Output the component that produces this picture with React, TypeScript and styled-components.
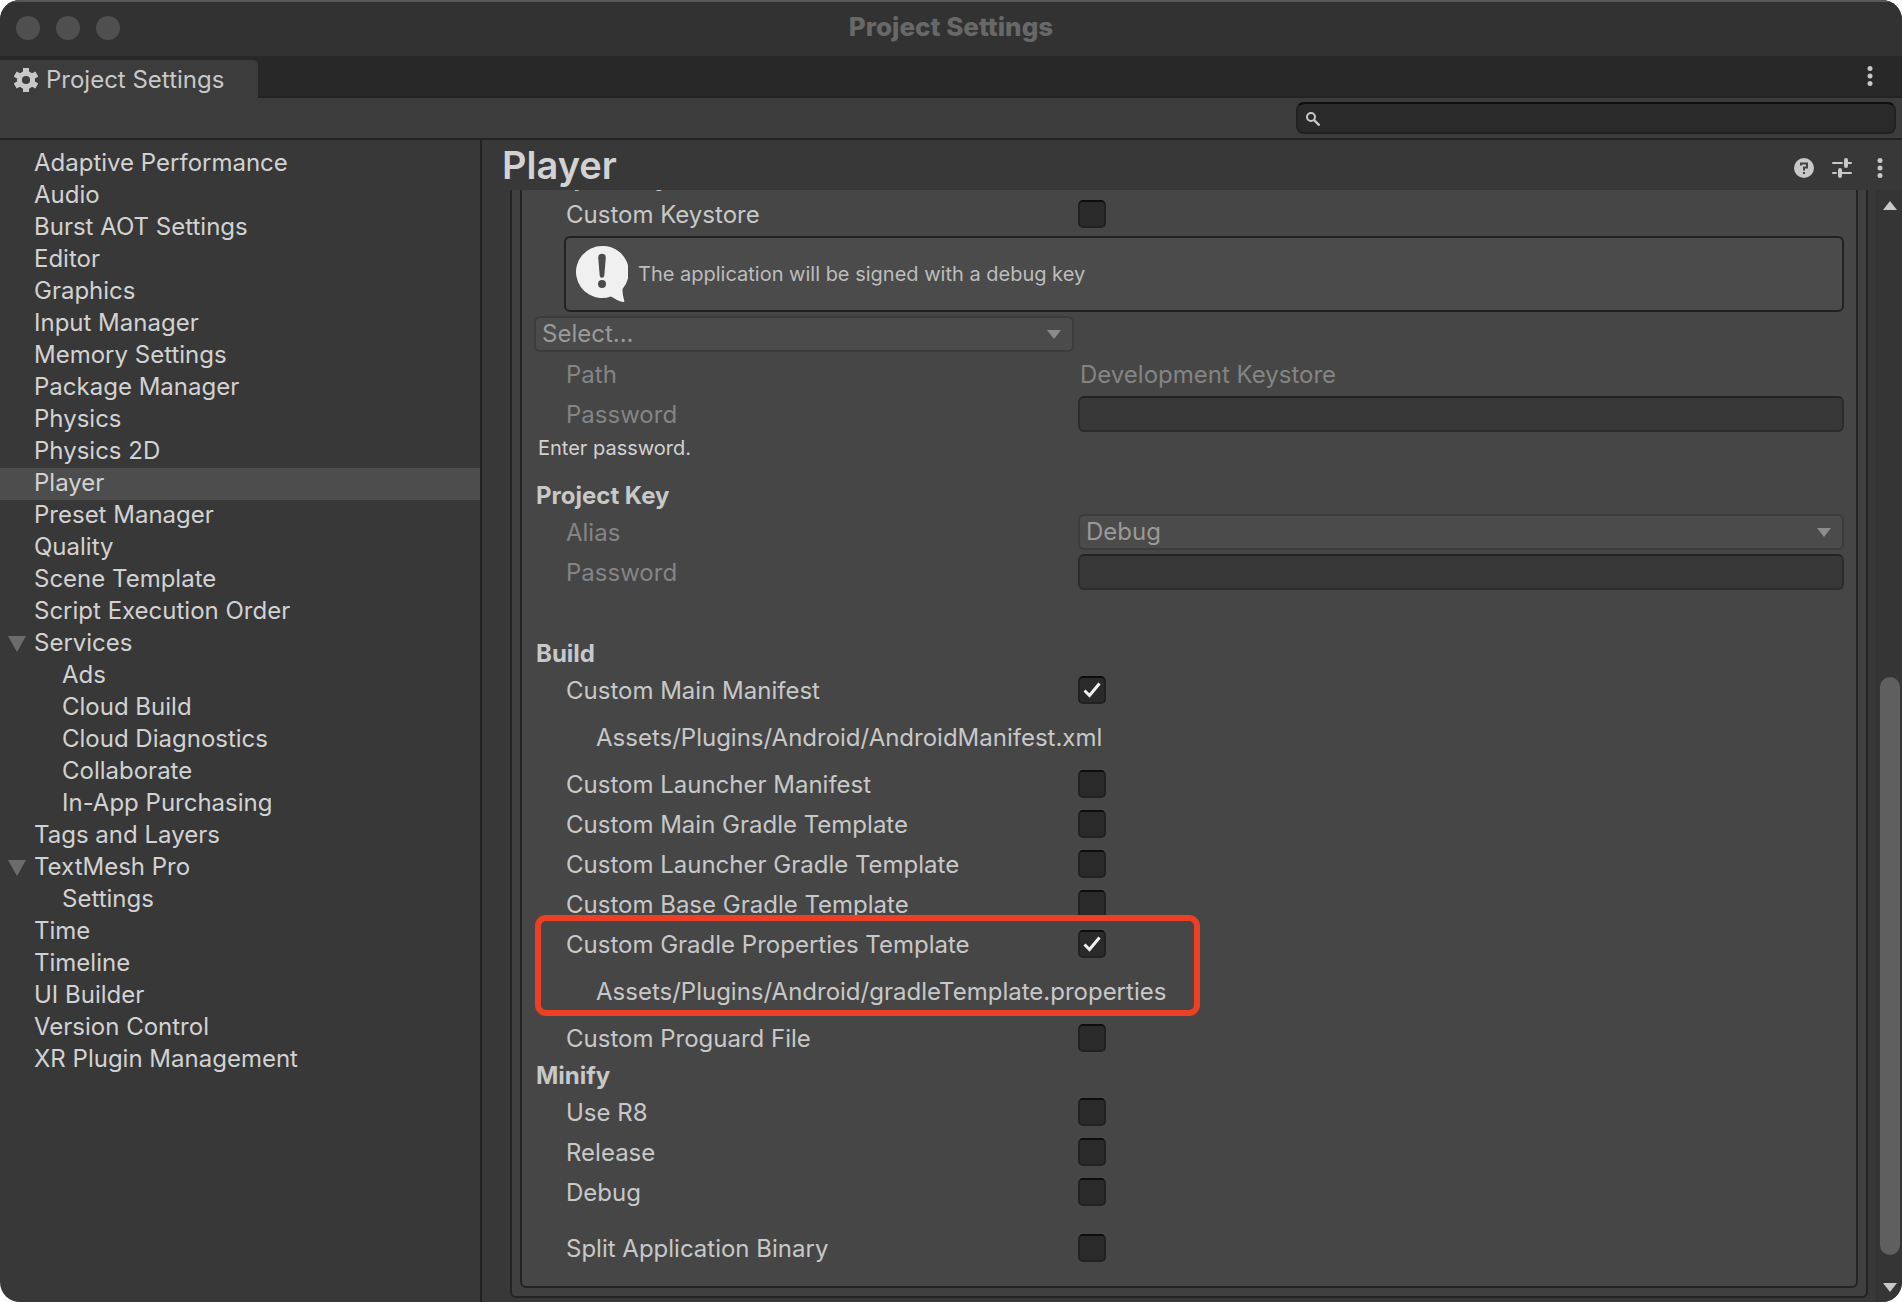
import React from "react";
import styled, { createGlobalStyle, css } from "styled-components";

const GlobalStyle = createGlobalStyle`
  *, *::before, *::after { box-sizing: border-box; }
  body { margin: 0; background: #fff; }
  button, input, select { font: inherit; color: inherit; margin: 0; padding: 0; }
`;

const Window = styled.div`
  display: flex;
  flex-direction: column;
  height: 100vh;
  min-width: 1300px;
  overflow: hidden;
  border-radius: 20px;
  background: #383838;
  color: #c8c8c8;
  font: 400 24px/30px Inter, sans-serif;
`;

const TitleBar = styled.header`
  display: grid;
  grid-template-columns: 1fr auto 1fr;
  align-items: center;
  height: 56px;
  flex: none;
  padding: 0 16px;
  background: #323232;
  box-shadow: inset 0 2px 0 #585858;
`;
const Lights = styled.div`
  display: flex;
  gap: 16px;
`;
const Light = styled.button`
  width: 24px;
  height: 24px;
  border: 0;
  border-radius: 50%;
  background: #4f4f4f;
`;
const WindowTitle = styled.div`
  padding-bottom: 2px;
  color: #686868;
  font-size: 26px;
  font-weight: 800;
`;

const TabStrip = styled.div`
  display: flex;
  justify-content: space-between;
  height: 42px;
  flex: none;
  padding-right: 20px;
  background: #282828;
  box-shadow: inset 0 -2px 0 #232323;
`;
const Tab = styled.button`
  display: flex;
  align-items: center;
  gap: 8px;
  align-self: flex-end;
  width: 258px;
  height: 38px;
  padding: 2px 0 0 14px;
  border: 0;
  border-radius: 0 5px 0 0;
  background: #3c3c3c;
`;
const IconButton = styled.button`
  display: flex;
  align-items: center;
  justify-content: center;
  width: 24px;
  height: 40px;
  border: 0;
  background: none;
`;

const Toolbar = styled.div`
  display: flex;
  justify-content: flex-end;
  align-items: center;
  height: 42px;
  flex: none;
  padding: 0 6px 2px 0;
  background: #3c3c3c;
  box-shadow: inset 0 -2px 0 #232323;
`;
const SearchBox = styled.label`
  display: flex;
  align-items: center;
  gap: 8px;
  width: 600px;
  height: 32px;
  padding: 2px 10px 0 8px;
  border: 2px solid #212121;
  border-top-color: #0d0d0d;
  border-radius: 8px;
  background: #2a2a2a;
`;
const SearchInput = styled.input`
  flex: 1;
  min-width: 0;
  height: 26px;
  border: 0;
  outline: 0;
  background: transparent;
`;

const Body = styled.div`
  display: flex;
  flex: 1;
  min-height: 0;
`;
const Sidebar = styled.nav`
  width: 482px;
  flex: none;
  padding-top: 8px;
  border-right: 2px solid #212121;
  color: #d2d2d2;
`;
const NavItem = styled.a<{ $level: number; $active: boolean }>`
  display: flex;
  align-items: center;
  gap: 8px;
  height: 32px;
  padding-bottom: 2px;
  padding-left: ${(p) => (p.$level ? 62 : 8)}px;
  background: ${(p) => (p.$active ? "#4d4d4d" : "transparent")};
  color: inherit;
  text-decoration: none;
`;
const Foldout = styled.span`
  display: flex;
  width: 18px;
  padding-top: 2px;
`;

const Main = styled.main`
  display: flex;
  flex-direction: column;
  flex: 1;
  min-width: 0;
`;
const PageHeader = styled.header`
  display: flex;
  align-items: center;
  justify-content: space-between;
  height: 50px;
  flex: none;
  padding: 0 10px 0 20px;
`;
const PageTitle = styled.h1`
  margin: 0;
  color: #d2d2d2;
  font-size: 38px;
  line-height: 46px;
  font-weight: 600;
`;
const HeaderActions = styled.div`
  display: flex;
  gap: 14px;
  padding-top: 6px;
`;

const Scroller = styled.div`
  display: flex;
  flex: 1;
  min-height: 0;
`;
const Viewport = styled.div`
  display: flex;
  flex-direction: column;
  justify-content: flex-end;
  flex: 1;
  min-width: 0;
  overflow: hidden;
  padding: 0 8px 4px 28px;
`;
const Frame = styled.div`
  flex: none;
  padding: 8px;
  border: 2px solid #232323;
  border-radius: 6px;
  background: #404040;
`;
const Panel = styled.form`
  display: flex;
  flex-direction: column;
  gap: 4px;
  padding: 40px 12px 20px;
  border: 2px solid #232323;
  border-radius: 6px;
  background: #464646;
`;
const Heading = styled.h2<{ $space?: number }>`
  margin: ${(p) => p.$space ?? 0}px 0 0 2px;
  padding-top: 2px;
  font-size: 24px;
  line-height: 28px;
  font-weight: 700;
`;
const Row = styled.div<{ $space?: number; $dim?: boolean }>`
  display: flex;
  align-items: center;
  height: 36px;
  margin-top: ${(p) => p.$space ?? 0}px;
  padding-left: 32px;
  color: ${(p) => (p.$dim ? "#848484" : "inherit")};
`;
const RowLabel = styled.label`
  width: 512px;
  flex: none;
  padding-top: 2px;
`;
const AssetPath = styled.div`
  padding-top: 2px;
  padding-left: 62px;
  line-height: 48px;
`;
const Note = styled.div`
  padding-left: 4px;
  color: #d2d2d2;
  font-size: 20px;
  line-height: 24px;
`;
const Value = styled.span`
  padding: 2px 0 0 2px;
`;
const HelpBox = styled.div`
  display: flex;
  align-items: center;
  gap: 10px;
  height: 76px;
  margin-left: 30px;
  padding-left: 10px;
  border: 2px solid #212121;
  border-radius: 6px;
  background: #4b4b4b;
  color: #bdbdbd;
  font-size: 20px;
`;

const well = css`
  border: 2px solid #212121;
  border-top-color: #0d0d0d;
  border-radius: 5px;
  background: #2a2a2a;
`;
const CheckWrap = styled.span`
  display: grid;
  place-items: center;
  & > * { grid-area: 1 / 1; }
  svg { pointer-events: none; }
`;
const CheckInput = styled.input`
  ${well}
  appearance: none;
  width: 28px;
  height: 28px;
`;
const TextInput = styled.input`
  flex: 1;
  min-width: 0;
  height: 36px;
  padding: 0 6px;
  border: 2px solid #2c2c2c;
  border-top-color: #222;
  border-radius: 6px;
  background: #383838;
`;
const SelectWrap = styled.span<{ $width?: number }>`
  display: grid;
  align-items: center;
  flex: ${(p) => (p.$width ? "none" : "1")};
  width: ${(p) => (p.$width ? p.$width + "px" : "auto")};
  color: #999;
  & > * { grid-area: 1 / 1; }
  svg { justify-self: end; margin-right: 13px; pointer-events: none; }
`;
const SelectInput = styled.select`
  appearance: none;
  width: 100%;
  height: 36px;
  padding: 0 30px 0 6px;
  border: 2px solid #3c3c3c;
  border-radius: 6px;
  background: #4b4b4b;
  color: #999;
  line-height: 30px;
  opacity: 1;
`;

const Highlighted = styled.div`
  position: relative;
  display: flex;
  flex-direction: column;
  gap: 4px;
  &::after {
    content: "";
    position: absolute;
    top: -11px;
    left: 1px;
    width: 665px;
    height: 101px;
    border: 6px solid #ec4026;
    border-radius: 11px;
    pointer-events: none;
  }
`;

const ScrollBar = styled.div`
  display: flex;
  flex-direction: column;
  align-items: center;
  width: 26px;
  flex: none;
  padding: 11px 2px 10px 2px;
  border-left: 2px solid #323232;
  background: #353535;
`;
const Track = styled.div`
  display: grid;
  grid-template-rows: 21fr 26fr;
  flex: 1;
  width: 20px;
  padding-bottom: 28px;
`;
const Thumb = styled.div`
  grid-row: 2;
  border-radius: 10px;
  background: #5f5f5f;
`;

const Gear = () => (
  <svg width="24" height="24" viewBox="0 0 24 24" fill="none" stroke="#c8c8c8">
    <circle cx="12" cy="12" r="6.6" strokeWidth="5" />
    <path strokeWidth="6" d="M12 0v5M12 19v5M1.2 6l4.2 2.4M18.6 15.600l4.200 2.400M1.200 18l4.200-2.400M18.600 8.400L22.800 6" />
  </svg>
);
const Dots = () => (
  <svg width="6" height="20" viewBox="0 0 6 20" fill="#c8c8c8">
    <circle cx="3" cy="2.500" r="2.500" />
    <circle cx="3" cy="10" r="2.500" />
    <circle cx="3" cy="17.500" r="2.500" />
  </svg>
);
const Magnifier = () => (
  <svg width="14" height="14" viewBox="0 0 14 14" fill="none" stroke="#c8c8c8" strokeWidth="2">
    <circle cx="5" cy="5" r="4" />
    <path strokeWidth="2.400" d="M8 8l5.500 5.500" />
  </svg>
);
const Help = () => (
  <svg width="20" height="20" viewBox="0 0 20 20">
    <circle cx="10" cy="10" r="10" fill="#c8c8c8" />
    <path d="M7 7.500V5.500h6v4h-3v3" fill="none" stroke="#444" strokeWidth="2" />
    <path d="M9 14h2v2H9z" fill="#444" />
  </svg>
);
const Sliders = () => (
  <svg width="20" height="20" viewBox="0 0 20 20" stroke="#c8c8c8" strokeLinecap="round">
    <path strokeWidth="2" d="M1 5h9M14 5h5M1 15h3M8 15h11" />
    <path strokeWidth="4" d="M14 2v6M8 12v6" />
  </svg>
);
const Bubble = () => (
  <svg width="52" height="56" viewBox="0 0 52 56">
    <path fill="#f0f0f0" d="M26 0a26 26 0 1 0 9 50.400C39 53 43 55 47 56c1.200.2 1.600-.4 1.200-1.500-1-3.500-1.700-7-1.700-11.500A26 26 0 0 0 26 0z" />
    <path fill="#4b4b4b" d="M22.200 11.500a3.800 3.800 0 0 1 7.600 0L28.300 29.500a2.300 2.300 0 0 1-4.600 0z" />
    <circle cx="26" cy="38" r="4" fill="#4b4b4b" />
  </svg>
);
const Triangle = ({ w, h, fill, up }: { w: number; h: number; fill: string; up?: boolean }) => (
  <svg width={w} height={h} viewBox="0 0 10 10" preserveAspectRatio="none">
    <path fill={fill} d={up ? "M0 10h10L5 0z" : "M0 0h10L5 10z"} />
  </svg>
);
const Tick = () => (
  <svg width="18" height="16" viewBox="0 0 18 16" fill="none" stroke="#f0f0f0" strokeWidth="3">
    <path d="M1.500 8.500l5 5L16.500 1.500" />
  </svg>
);

const Toggle = ({ label, checked, space }: { label: string; checked?: boolean; space?: number }) => {
  const [on, setOn] = React.useState(!!checked);
  const id = React.useId();
  return (
    <Row $space={space}>
      <RowLabel htmlFor={id}>{label}</RowLabel>
      <CheckWrap>
        <CheckInput id={id} type="checkbox" checked={on} onChange={() => setOn(!on)} />
        {on && <Tick />}
      </CheckWrap>
    </Row>
  );
};

const Password = ({ id }: { id: string }) => (
  <Row $dim>
    <RowLabel htmlFor={id}>Password</RowLabel>
    <TextInput id={id} type="password" disabled />
  </Row>
);

type Nav = { name: string; level?: number; open?: boolean };
const NAV: Nav[] = [
  { name: "Adaptive Performance" },
  { name: "Audio" },
  { name: "Burst AOT Settings" },
  { name: "Editor" },
  { name: "Graphics" },
  { name: "Input Manager" },
  { name: "Memory Settings" },
  { name: "Package Manager" },
  { name: "Physics" },
  { name: "Physics 2D" },
  { name: "Player" },
  { name: "Preset Manager" },
  { name: "Quality" },
  { name: "Scene Template" },
  { name: "Script Execution Order" },
  { name: "Services", open: true },
  { name: "Ads", level: 1 },
  { name: "Cloud Build", level: 1 },
  { name: "Cloud Diagnostics", level: 1 },
  { name: "Collaborate", level: 1 },
  { name: "In-App Purchasing", level: 1 },
  { name: "Tags and Layers" },
  { name: "TextMesh Pro", open: true },
  { name: "Settings", level: 1 },
  { name: "Time" },
  { name: "Timeline" },
  { name: "UI Builder" },
  { name: "Version Control" },
  { name: "XR Plugin Management" },
];

export default function App() {
  return (
    <>
      <GlobalStyle />
      <Window>
        <TitleBar>
          <Lights>
            <Light aria-label="Close" />
            <Light aria-label="Minimize" />
            <Light aria-label="Zoom" />
          </Lights>
          <WindowTitle>Project Settings</WindowTitle>
        </TitleBar>
        <TabStrip>
          <Tab><Gear />Project Settings</Tab>
          <IconButton aria-label="Tab menu"><Dots /></IconButton>
        </TabStrip>
        <Toolbar>
          <SearchBox>
            <Magnifier />
            <SearchInput type="text" aria-label="Search" />
          </SearchBox>
        </Toolbar>
        <Body>
          <Sidebar>
            {NAV.map((n) => (
              <NavItem key={n.name} href="#" $level={n.level ?? 0} $active={n.name === "Player"}>
                {!n.level && <Foldout>{n.open && <Triangle w={18} h={16} fill="#6c6c6c" />}</Foldout>}
                {n.name}
              </NavItem>
            ))}
          </Sidebar>
          <Main>
            <PageHeader>
              <PageTitle>Player</PageTitle>
              <HeaderActions>
                <IconButton aria-label="Help"><Help /></IconButton>
                <IconButton aria-label="Presets"><Sliders /></IconButton>
                <IconButton aria-label="More"><Dots /></IconButton>
              </HeaderActions>
            </PageHeader>
            <Scroller>
              <Viewport>
                <Frame>
                  <Panel>
                    <Heading>Project Keystore</Heading>
                    <Toggle label="Custom Keystore" />
                    <HelpBox><Bubble />The application will be signed with a debug key</HelpBox>
                    <SelectWrap $width={540}>
                      <SelectInput aria-label="Keystore" disabled><option>Select...</option></SelectInput>
                      <Triangle w={14} h={9} fill="#8c8c8c" />
                    </SelectWrap>
                    <Row $dim>
                      <RowLabel as="span">Path</RowLabel>
                      <Value>Development Keystore</Value>
                    </Row>
                    <Password id="keystore-password" />
                    <Note>Enter password.</Note>
                    <Heading $space={16}>Project Key</Heading>
                    <Row $dim>
                      <RowLabel htmlFor="alias">Alias</RowLabel>
                      <SelectWrap>
                        <SelectInput id="alias" disabled><option>Debug</option></SelectInput>
                        <Triangle w={14} h={9} fill="#8c8c8c" />
                      </SelectWrap>
                    </Row>
                    <Password id="key-password" />
                    <Heading $space={44}>Build</Heading>
                    <Toggle label="Custom Main Manifest" checked />
                    <AssetPath>Assets/Plugins/Android/AndroidManifest.xml</AssetPath>
                    <Toggle label="Custom Launcher Manifest" />
                    <Toggle label="Custom Main Gradle Template" />
                    <Toggle label="Custom Launcher Gradle Template" />
                    <Toggle label="Custom Base Gradle Template" />
                    <Highlighted>
                      <Toggle label="Custom Gradle Properties Template" checked />
                      <AssetPath>Assets/Plugins/Android/gradleTemplate.properties</AssetPath>
                    </Highlighted>
                    <Toggle label="Custom Proguard File" />
                    <Heading>Minify</Heading>
                    <Toggle label="Use R8" />
                    <Toggle label="Release" />
                    <Toggle label="Debug" />
                    <Toggle label="Split Application Binary" space={16} />
                  </Panel>
                </Frame>
              </Viewport>
              <ScrollBar>
                <Triangle w={14} h={9} fill="#c8c8c8" up />
                <Track><Thumb /></Track>
                <Triangle w={14} h={9} fill="#c8c8c8" />
              </ScrollBar>
            </Scroller>
          </Main>
        </Body>
      </Window>
    </>
  );
}
